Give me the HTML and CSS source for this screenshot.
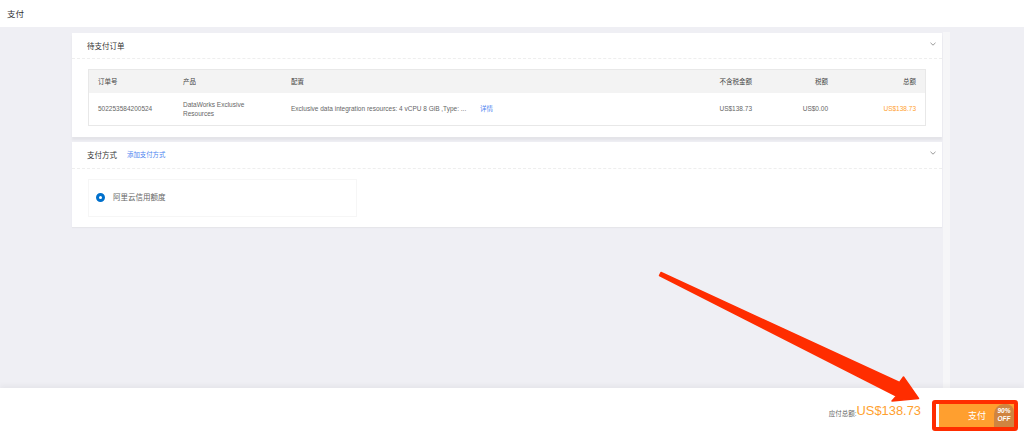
FILE: index.html
```html
<!DOCTYPE html>
<html lang="zh">
<head>
<meta charset="utf-8">
<title>支付</title>
<link rel="stylesheet" href="styles.css">
</head>
<body>
<header class="topbar">支付</header>
<main class="main">
  <div class="column">
    <section class="card card-order">
      <div class="card-head">
        <span class="card-title">待支付订单</span>
        <svg class="chevron" viewBox="0 0 6 4"><path d="M.5.8 3 3.2 5.500.8"/></svg>
      </div>
      <div class="card-body">
        <div class="table">
          <div class="row row-head">
            <div class="cell">订单号</div>
            <div class="cell">产品</div>
            <div class="cell">配置</div>
            <div class="cell num">不含税金额</div>
            <div class="cell num">税额</div>
            <div class="cell num last">总额</div>
          </div>
          <div class="row row-data">
            <div class="cell">502253584200524</div>
            <div class="cell product">DataWorks Exclusive Resources</div>
            <div class="cell config">
              <span class="config-text">Exclusive data integration resources: 4 vCPU 8 GiB ,Type: ...</span>
              <span class="link">详情</span>
            </div>
            <div class="cell num">US$138.73</div>
            <div class="cell num">US$0.00</div>
            <div class="cell num last total">US$138.73</div>
          </div>
        </div>
      </div>
    </section>
    <section class="card card-pay">
      <div class="card-head head-pay">
        <span class="card-title">支付方式</span>
        <span class="link add">添加支付方式</span>
        <svg class="chevron" viewBox="0 0 6 4"><path d="M.5.8 3 3.2 5.500.8"/></svg>
      </div>
      <div class="card-body body-pay">
        <div class="option">
          <span class="radio"></span>
          <span class="option-text">阿里云信用额度</span>
        </div>
      </div>
    </section>
  </div>
  <div class="strip"></div>
</main>
<footer class="footer">
  <span class="due-label">应付总额:</span>
  <span class="due-amount">US$138.73</span>
  <div class="pay-wrap">
    <button class="pay-btn"><span class="pay-text">支付</span></button>
    <span class="badge">90%<br>OFF</span>
  </div>
</footer>
<svg class="arrow" viewBox="0 0 1024 432" aria-hidden="true">
  <path d="M659.500 275.500 661 272.500 899.500 382.500 903.500 377 918.500 398.500 892 401 896.500 396Z" stroke="#ff2d00" stroke-width="1.500" stroke-linejoin="round" fill="#ff2d00"/>
</svg>
</body>
</html>
```
FILE: styles.css
```css
* { box-sizing: border-box; }
html, body { margin: 0; height: 100%; }
body {
  width: 1024px;
  height: 432px;
  overflow: hidden;
  display: flex;
  flex-direction: column;
  background: #efeff4;
  color: #555;
  font-family: "Liberation Sans", "Noto Sans CJK SC", sans-serif;
  font-size: 6.500px;
  position: relative;
}
.topbar {
  height: 27px;
  flex: none;
  background: #fff;
  padding: 9px 0 0 7px;
  font-size: 8.500px;
  line-height: 11px;
  color: #333;
}
.main {
  flex: 1;
  min-height: 0;
  display: flex;
  padding: 5px 0 0 72px;
  gap: 1px;
  align-items: stretch;
}
.column { width: 870px; padding-top: 1px; }
.strip { width: 7px; background: #f6f6f8; }
.card { background: #fff; }
.card-order { height: 104px; box-shadow: 0 3px 2px #e4e4e8; margin-bottom: 5px; }
.card-pay { height: 85px; box-shadow: 0 1px 1px #e6e6ea; }
.card-head {
  height: 26px;
  border-bottom: 1px dashed #eee;
  padding: 0 6px 1px 15px;
  display: flex;
  align-items: center;
  gap: 10px;
}
.head-pay { height: 27px; }
.card-title { font-size: 7.500px; color: #333; }
.chevron {
  width: 6px;
  height: 4px;
  margin-left: auto;
  margin-top: -3px;
  fill: none;
  stroke: #999;
  stroke-width: 1;
}
.card-body { padding: 10px 16px 0; }
.body-pay { padding-top: 10px; }
.table { width: 838px; border: 1px solid #e8e8e8; }
.row {
  display: grid;
  grid-template-columns: 85px 108px 1fr 80px 76px 97px;
  align-items: center;
}
.row-head { height: 23px; padding-bottom: 1px; background: #f3f3f3; color: #444; }
.row-data { height: 32px; line-height: 9.500px; color: #666; }
.cell { padding-left: 9px; min-width: 0; }
.num { text-align: right; padding-left: 0; }
.last { padding-right: 9px; }
.product { padding-right: 30px; }
.config { display: flex; gap: 13px; }
.config-text { width: 176px; white-space: nowrap; }
.link { color: #4c84f0; }
.total { color: #ff9f2f; }
.add { font-size: 6.400px; }
.option {
  width: 269px;
  height: 38px;
  border: 1px solid #f6f6f6;
  display: flex;
  align-items: center;
  padding-left: 7px;
  gap: 8px;
}
.radio {
  width: 9px;
  height: 9px;
  margin-top: -1px;
  border-radius: 50%;
  border: 3px solid #0070cc;
  background: #fff;
}
.option-text { font-size: 7.500px; color: #666; margin-top: -3px; }
.footer {
  height: 44px;
  flex: none;
  background: #fff;
  box-shadow: 0 -3px 5px rgba(0, 0, 0, .04);
  position: relative;
  display: flex;
  justify-content: flex-end;
  align-items: center;
  padding: 0 6px 0 0;
}
.due-label { font-size: 6.500px; color: #666; margin-top: 5px; }
.due-amount { font-size: 12.900px; color: #ff9f2f; margin-right: 11px; margin-top: 1px; }
.pay-wrap {
  position: relative;
  width: 86px;
  height: 31px;
  margin-top: 10px;
  border: 4px solid #ff2d00;
  border-radius: 3px;
}
.pay-btn {
  display: block;
  width: 100%;
  height: 100%;
  padding: 0 28px 0 0;
  border: 0;
  border-left: 3px solid #fff;
  background: #ff9f2f;
  color: #fff;
  font: 9px "Liberation Sans", "Noto Sans CJK SC", sans-serif;
  text-align: right;
}
.badge {
  position: absolute;
  right: 0;
  bottom: 0;
  width: 20px;
  height: 23px;
  border-radius: 10px 8px 0 0;
  background: #cf8441;
  color: #fff;
  font-size: 6.500px;
  font-weight: 700;
  font-style: italic;
  line-height: 8.500px;
  text-align: center;
  padding-top: 3px;
}
.arrow {
  position: absolute;
  left: 0;
  top: 0;
  width: 1024px;
  height: 432px;
  pointer-events: none;
}
```
